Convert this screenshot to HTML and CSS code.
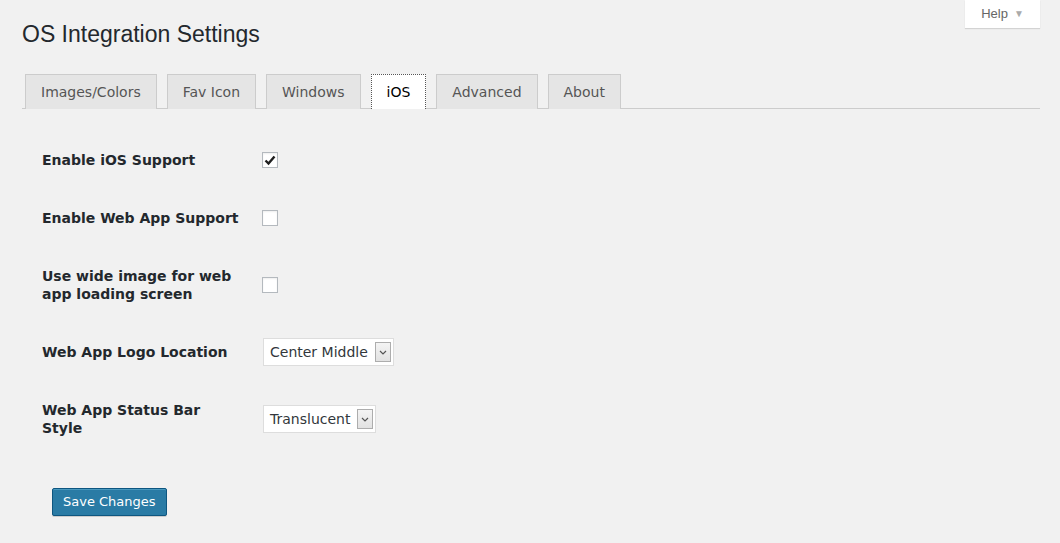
FILE: index.html
```html
<!DOCTYPE html>
<html>
<head>
<meta charset="utf-8">
<link rel="stylesheet" href="styles.css">
</head>
<body>
<div class="help-wrap">
  <div class="help-tab">Help <span class="help-arrow">▼</span></div>
</div>
<div class="wrap">
  <h1 class="title">OS Integration Settings</h1>
  <nav class="tabs">
    <span class="tab">Images/Colors</span>
    <span class="tab">Fav Icon</span>
    <span class="tab">Windows</span>
    <span class="tab active">iOS</span>
    <span class="tab">Advanced</span>
    <span class="tab">About</span>
  </nav>
  <div class="form">
    <div class="row">
      <div class="label">Enable iOS Support</div>
      <div class="field"><span class="check checked"><svg width="12" height="11" viewBox="0 0 12 11"><path d="M1.5 5.5 L4.5 8.5 L10.5 1.5" fill="none" stroke="#1e1e1e" stroke-width="2.4"/></svg></span></div>
    </div>
    <div class="row">
      <div class="label">Enable Web App Support</div>
      <div class="field"><span class="check"></span></div>
    </div>
    <div class="row">
      <div class="label">Use wide image for web app loading screen</div>
      <div class="field"><span class="check"></span></div>
    </div>
    <div class="row">
      <div class="label">Web App Logo Location</div>
      <div class="field"><div class="select"><span class="sel-value">Center Middle</span><span class="sel-arrow"><svg width="8" height="5" viewBox="0 0 8 5"><path d="M1 1 L4 4 L7 1" fill="none" stroke="#555" stroke-width="1.2"/></svg></span></div></div>
    </div>
    <div class="row">
      <div class="label">Web App Status Bar Style</div>
      <div class="field"><div class="select"><span class="sel-value">Translucent</span><span class="sel-arrow"><svg width="8" height="5" viewBox="0 0 8 5"><path d="M1 1 L4 4 L7 1" fill="none" stroke="#555" stroke-width="1.2"/></svg></span></div></div>
    </div>
  </div>
  <div class="submit"><span class="button">Save Changes</span></div>
</div>
</body>
</html>
```

FILE: styles.css
```css
html, body {
  margin: 0;
  padding: 0;
  background: #f1f1f1;
}
body {
  font-family: "DejaVu Sans", Verdana, sans-serif;
  color: #222;
  font-size: 13px;
  width: 1060px;
  height: 543px;
  overflow: hidden;
  position: relative;
}
.help-wrap {
  display: flex;
  justify-content: flex-end;
  padding-right: 20px;
  height: 0;
}
.help-tab {
  position: relative;
  z-index: 2;
  width: 75px;
  height: 28px;
  box-sizing: border-box;
  background: #fff;
  box-shadow: 0 1px 1px rgba(0,0,0,0.12);
  font-family: "Liberation Sans", Arial, sans-serif;
  font-size: 13px;
  color: #666;
  display: flex;
  align-items: center;
  justify-content: center;
  gap: 6px;
  padding-bottom: 1px;
}
.help-arrow {
  font-size: 10px;
  color: #aaa;
}
.wrap {
  padding: 0 20px 0 22px;
}
.title {
  margin: 0;
  padding-top: 21px;
  height: 74px;
  box-sizing: border-box;
  font-family: "Liberation Sans", Arial, sans-serif;
  font-weight: normal;
  font-size: 23px;
  line-height: 26px;
  color: #23282d;
}
.tabs {
  display: flex;
  gap: 10px;
  border-bottom: 1px solid #ccc;
  padding-left: 3px;
  height: 34px;
}
.tab {
  display: block;
  box-sizing: border-box;
  height: 35px;
  padding: 0 15px;
  background: #e5e5e5;
  border: 1px solid #ccc;
  border-bottom: none;
  font-size: 14px;
  line-height: 34px;
  color: #555;
}
.tab.active {
  background: #fff;
  color: #000;
  border: 1px dotted #555;
  border-bottom: none;
  padding: 0 15px;
  height: 35px;
}
.form {
  padding: 22px 0 0 20px;
}
.row {
  display: flex;
  align-items: center;
}
.label {
  width: 200px;
  padding: 20px 20px 20px 0;
  font-weight: bold;
  font-size: 14px;
  line-height: 18px;
  color: #23282d;
}
.field {
  display: flex;
  align-items: center;
}
.check {
  display: flex;
  align-items: center;
  justify-content: center;
  width: 16px;
  height: 16px;
  box-sizing: border-box;
  background: #fff;
  border: 1px solid #b4b9be;
  box-shadow: inset 0 1px 2px rgba(0,0,0,0.07);
}
.select {
  display: flex;
  align-items: center;
  height: 28px;
  margin-left: 1px;
  box-sizing: border-box;
  background: #fff;
  border: 1px solid #ddd;
  padding: 0 2px 0 6px;
  gap: 7px;
  font-size: 14px;
  color: #32373c;
}
.sel-value {
  line-height: 26px;
}
.sel-arrow {
  display: flex;
  align-items: center;
  justify-content: center;
  width: 16px;
  height: 20px;
  box-sizing: border-box;
  background: linear-gradient(#f4f4f4, #e2e2e2);
  border: 1px solid #adadad;
}
.submit {
  padding: 31px 0 0 30px;
}
.button {
  display: inline-block;
  box-sizing: border-box;
  height: 28px;
  padding: 0 10px;
  background: #2a7ba5;
  border: 1px solid #0e5680;
  border-radius: 2px;
  box-shadow: inset 0 1px 0 rgba(120,200,230,0.4), 0 1px 0 rgba(0,0,0,0.15);
  color: #fff;
  font-size: 13px;
  line-height: 26px;
}
```
